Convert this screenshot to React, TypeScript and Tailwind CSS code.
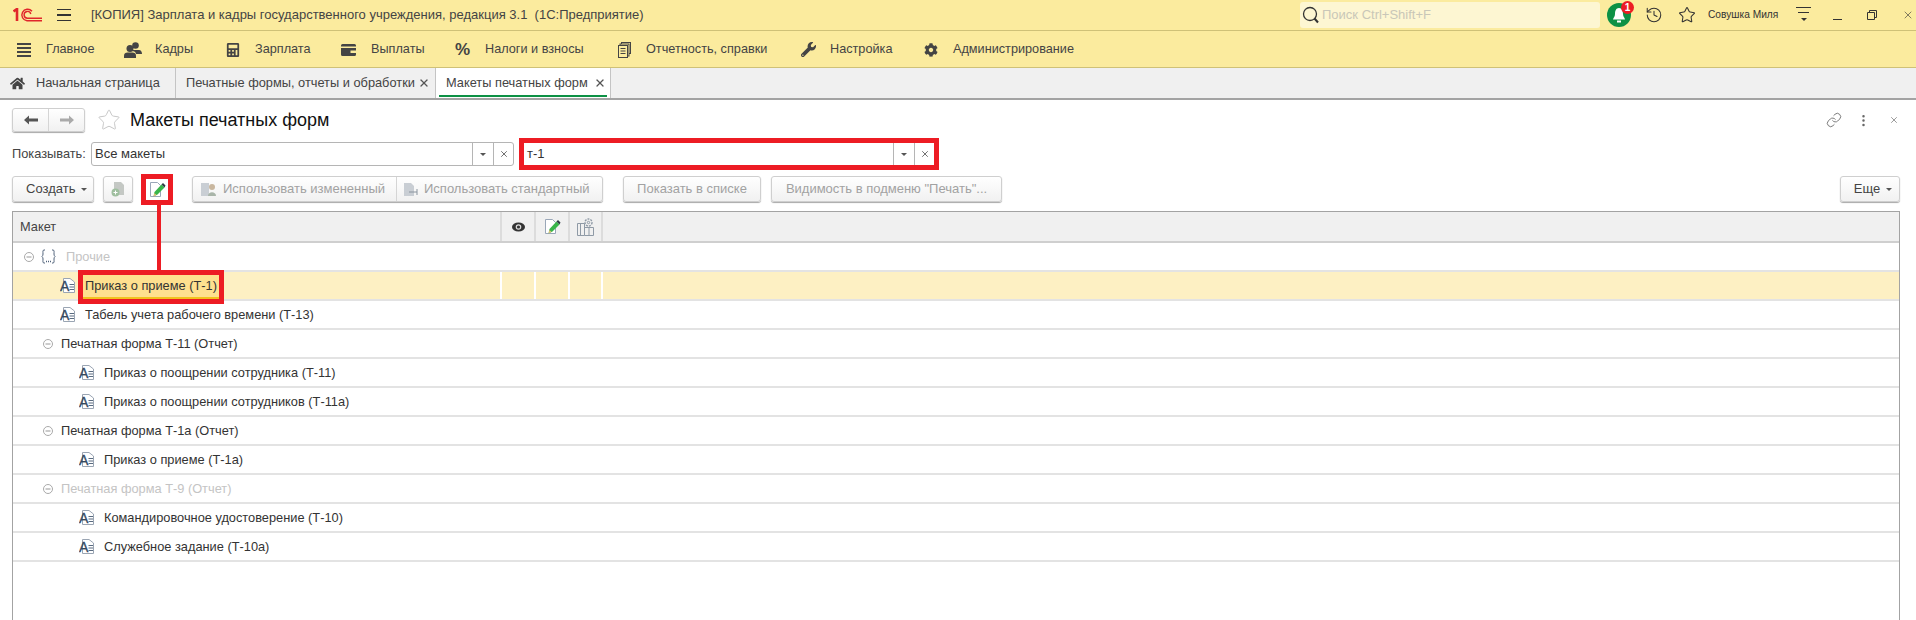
import { History, Link as LinkIcon, MoreVertical, Star, X } from "lucide-react";
import { FaCalculator, FaCog, FaHome, FaWrench } from "react-icons/fa";
import type { ReactNode } from "react";

const btn =
  "flex items-center justify-center h-[26px] rounded-[3px] border border-[#cfcfcf] bg-linear-to-b from-white to-[#f1f1f1] shadow-[0_1px_1px_#a8a8a8]";

const Logo = () => (
  <svg width="30" height="14" viewBox="0 0 30 14" fill="none" stroke="#e0262b">
    <path d="M0.5 3.5 L4 1 V13" strokeWidth="2.6" />
    <path d="M29 12.8 H14 A5.8 5.8 0 1 1 19 3.2" strokeWidth="1.4" />
    <path d="M29 10.2 H14.5 A3.4 3.4 0 1 1 17.8 6" strokeWidth="1.4" />
  </svg>
);

const Lines = ({ count = 3, w = 14, gap = 4, color = "#333" }: { count?: number; w?: number; gap?: number; color?: string }) => (
  <div className="flex flex-col" style={{ gap }}>
    {Array.from({ length: count }).map((_, i) => (
      <div key={i} className="h-[1.5px]" style={{ width: w, background: color }} />
    ))}
  </div>
);

const PeopleIcon = () => (
  <svg width="18" height="16" viewBox="0 0 18 16" fill="#444">
    <circle cx="11.5" cy="3.5" r="3.3" />
    <path d="M8 8 H15 C17 8 18 10 18 12 H12 C12 10 10 9 8 9 Z" />
    <circle cx="6" cy="6.5" r="3.5" />
    <path d="M0 16 V13.5 C0 11.5 1.5 10.5 3.5 10.5 H8.5 C10.5 10.5 12 11.5 12 13.5 V16 Z" />
  </svg>
);

const WalletIcon = () => (
  <svg width="15" height="12" viewBox="0 0 15 12" fill="#444">
    <path d="M0 1.5 A1.5 1.5 0 0 1 1.5 0 H13.5 A1.5 1.5 0 0 1 15 1.5 V2.5 H0 Z" />
    <path d="M0 4 H15 V10.5 A1.5 1.5 0 0 1 13.5 12 H1.5 A1.5 1.5 0 0 1 0 10.5 Z M9.5 6.5 V9 H15 V6.5 Z" fillRule="evenodd" />
  </svg>
);

const ReportsIcon = () => (
  <svg width="13" height="16" viewBox="0 0 13 16" fill="none" stroke="#444" strokeWidth="1">
    <rect x="3.5" y="0.5" width="9" height="11" fill="#fbeb9e" />
    <rect x="2" y="2" width="9" height="12" fill="#fbeb9e" />
    <rect x="0.5" y="3.5" width="9" height="12" fill="#fbeb9e" />
    <path d="M2.5 6.5 H7.5 M2.5 9 H7.5 M2.5 11.5 H7.5" />
  </svg>
);

const TemplateIcon = ({ ml }: { ml: number }) => (
  <svg width="16" height="15" viewBox="0 0 16 15" className="shrink-0" style={{ marginLeft: ml }}>
    <path d="M3.5 0.5 H10 L14.5 4 V14.5 H3.5 Z" fill="#fff" stroke="#9aa5b3" />
    <text x="0" y="13" fontSize="14" fontFamily="Liberation Sans" fill="#34495f" stroke="#34495f" strokeWidth="0.3">
      A
    </text>
    <path d="M9.5 6.5 H14 M9.5 9 H14 M9.5 11.5 H14" stroke="#5a6b80" />
  </svg>
);

const Collapse = ({ ml }: { ml: number }) => (
  <svg width="10" height="10" viewBox="0 0 10 10" className="shrink-0" style={{ marginLeft: ml }} fill="none" stroke="#a9a9a9">
    <circle cx="5" cy="5" r="4.5" />
    <path d="M2.5 5 H7.5" strokeWidth="1.2" />
  </svg>
);

const EditIcon = () => (
  <svg width="17" height="17" viewBox="0 0 17 17">
    <path d="M1.5 1.5 H8.5 L11.5 4.5 V15.5 H1.5 Z" fill="#fff" stroke="#9aa7b8" />
    <path d="M4.5 15.5 L5.5 11 L12.5 3.5 L15.5 6.5 L8.5 13.5 Z" fill="#39b54a" />
    <path d="M12.5 3.5 L14 2 L16.5 4.5 L15.5 6.5 Z" fill="#2f3b45" />
    <path d="M4.5 15.5 L5.5 12 L7.5 14 Z" fill="#e5c07b" />
  </svg>
);

const GearsTableIcon = () => (
  <svg width="17" height="18" viewBox="0 0 17 18" fill="none" stroke="#8f9aa6">
    <path d="M0.5 5.5 H7.5 V17.5 H0.5 Z M3.5 5.5 V17.5 M7.5 9.5 H16.5 V17.5 H7.5 M12 9.5 V17.5" />
    <circle cx="11.5" cy="4.5" r="3.5" fill="#f0f0f0" strokeWidth="1.4" strokeDasharray="2 1" />
    <circle cx="11.5" cy="4.5" r="1.2" />
  </svg>
);

const Eye = () => (
  <svg width="13" height="10" viewBox="0 0 13 10">
    <ellipse cx="6.5" cy="5" rx="6.5" ry="4.5" fill="#333" />
    <circle cx="6.5" cy="5" r="2.8" fill="#ddd" />
    <circle cx="6.5" cy="5" r="1.6" fill="#333" />
  </svg>
);

const Caret = ({ color = "#555" }: { color?: string }) => (
  <div className="h-0 w-0 border-x-[3px] border-t-[3px] border-x-transparent" style={{ borderTopColor: color }} />
);

const menu: { label: string; icon: ReactNode; iconW: number; gap: number; w: number }[] = [
  { label: "Главное", icon: <Lines count={4} w={14} gap={2.5} color="#444" />, iconW: 14, gap: 15, w: 107 },
  { label: "Кадры", icon: <PeopleIcon />, iconW: 18, gap: 13, w: 102 },
  { label: "Зарплата", icon: <FaCalculator size={14} color="#444" />, iconW: 14, gap: 15, w: 115 },
  { label: "Выплаты", icon: <WalletIcon />, iconW: 15, gap: 15, w: 114 },
  { label: "Налоги и взносы", icon: <span className="text-[17px] font-bold text-[#444]">%</span>, iconW: 15, gap: 15, w: 163 },
  { label: "Отчетность, справки", icon: <ReportsIcon />, iconW: 13, gap: 15, w: 182 },
  { label: "Настройка", icon: <FaWrench size={15} color="#444" />, iconW: 16, gap: 14, w: 124 },
  { label: "Администрирование", icon: <FaCog size={14} color="#444" />, iconW: 14, gap: 15, w: 160 },
];

const TitleBar = () => (
  <div className="flex h-[31px] items-center border-b border-[#cfc177] bg-[#fbeb9e] text-[#444]">
    <div className="ml-[13px]">
      <Logo />
    </div>
    <div className="ml-[14px]">
      <Lines />
    </div>
    <span className="ml-[20px] text-[13px]">[КОПИЯ] Зарплата и кадры государственного учреждения, редакция 3.1&nbsp; (1С:Предприятие)</span>
    <div className="ml-auto flex h-[26px] w-[300px] items-center rounded-[3px] bg-[#fdf6d2] pl-[2px]">
      <svg width="18" height="18" viewBox="0 0 18 18" fill="none" stroke="#333" strokeWidth="1.3">
        <circle cx="8" cy="8" r="6.5" />
        <path d="M12.5 12.5 L16 16.5" strokeWidth="2" />
      </svg>
      <span className="ml-[2px] text-[13px] text-[#c9c7b8]">Поиск Ctrl+Shift+F</span>
    </div>
    <div className="relative ml-[7px] flex h-[24px] w-[24px] items-center justify-center rounded-full bg-[#0d9145]">
      <svg width="14" height="16" viewBox="0 0 14 16" fill="#fff">
        <path d="M7 1 C10 1 11 4 11 7 C11 10 13 11 13 12.5 H1 C1 11 3 10 3 7 C3 4 4 1 7 1 Z" />
        <rect x="5" y="13.5" width="4" height="2" />
      </svg>
      <span className="absolute -top-[2px] -right-[3px] flex h-[13px] w-[13px] items-center justify-center rounded-full bg-[#ed1c24] text-[10px] font-bold text-white">
        1
      </span>
    </div>
    <History size={18} strokeWidth={1.4} color="#333" className="ml-[14px]" />
    <Star size={18} strokeWidth={1.4} color="#333" className="ml-[15px]" />
    <span className="ml-[12px] w-[76px] text-[10.2px] whitespace-nowrap text-[#333]">Совушка Миля</span>
    <div className="relative ml-[12px] flex h-[16px] w-[15px] flex-col items-center gap-[4px]">
      <div className="h-px w-[15px] bg-[#333]" />
      <div className="h-px w-[11px] bg-[#333]" />
      <div className="mt-[1px]">
        <Caret color="#333" />
      </div>
    </div>
    <div className="mt-[9px] ml-[22px] h-[1.5px] w-[9px] bg-[#333]" />
    <svg width="10" height="10" viewBox="0 0 10 10" fill="none" stroke="#333" className="ml-[25px]">
      <path d="M0.5 2.5 H7.5 V9.5 H0.5 Z M2.5 2.5 V0.5 H9.5 V7.5 H7.5" />
    </svg>
    <X size={12} strokeWidth={1.2} color="#333" className="mr-[2px] ml-[25px]" />
  </div>
);

const MenuBar = () => (
  <div className="flex h-[37px] items-center border-b border-[#cfc177] bg-[#fbeb9e] pt-[2px] pl-[17px] text-[12.7px] text-[#444]">
    {menu.map((m) => (
      <div key={m.label} className="flex items-center" style={{ gap: m.gap, width: m.w }}>
        <div className="flex items-center justify-center" style={{ width: m.iconW }}>
          {m.icon}
        </div>
        <span className="whitespace-nowrap">{m.label}</span>
      </div>
    ))}
  </div>
);

const TabClose = () => <X size={12} strokeWidth={2.5} color="#555" />;

const Tabs = () => (
  <div className="flex h-[32px] border-b-2 border-[#a3a3a3] bg-[#f0f0f0] text-[12.8px] text-[#444]">
    <div className="flex w-[176px] items-center border-r border-[#c4c4c4] pl-[10px]">
      <FaHome size={15} color="#444" />
      <span className="ml-[11px]">Начальная страница</span>
    </div>
    <div className="flex w-[260px] items-center border-r border-[#c4c4c4] pl-[10px]">
      <span className="whitespace-nowrap">Печатные формы, отчеты и обработки</span>
      <span className="ml-[3px]">
        <TabClose />
      </span>
    </div>
    <div className="relative flex w-[175px] items-center border-r border-[#c4c4c4] bg-white pl-[10px]">
      <span className="whitespace-nowrap">Макеты печатных форм</span>
      <span className="ml-[6px]">
        <TabClose />
      </span>
      <div className="absolute right-[3px] bottom-px left-[3px] h-[2px] bg-[#0d9145]" />
    </div>
  </div>
);

const Field = ({ value, className, bordered }: { value: string; className: string; bordered?: boolean }) => (
  <div
    className={`flex items-center bg-white text-[13px] text-[#333] ${
      bordered ? "h-[24px] rounded-[3px] border border-[#b5b5b5]" : "h-[22px]"
    } ${className}`}
  >
    <span className="flex-1 pl-[3px]">{value}</span>
    <div className="flex h-full w-[21px] items-center justify-center border-l border-[#b5b5b5]">
      <Caret />
    </div>
    <div className="flex h-full w-[20px] items-center justify-center border-l border-[#b5b5b5]">
      <X size={10} strokeWidth={2} color="#555" />
    </div>
  </div>
);

const Header = () => (
  <>
    <div className="flex h-[24px] items-center gap-[12px]">
      <div className="flex h-[24px] w-[73px] rounded-[3px] border border-[#cfcfcf] bg-linear-to-b from-white to-[#f1f1f1] shadow-[0_1px_1px_#a8a8a8]">
        <div className="flex flex-1 items-center justify-center border-r border-[#d5d5d5]">
          <svg width="14" height="10" viewBox="0 0 14 10" fill="#555">
            <path d="M0 5 L5 0.5 V3.5 H14 V6.5 H5 V9.5 Z" />
          </svg>
        </div>
        <div className="flex flex-1 items-center justify-center">
          <svg width="14" height="10" viewBox="0 0 14 10" fill="#aaa">
            <path d="M14 5 L9 0.5 V3.5 H0 V6.5 H9 V9.5 Z" />
          </svg>
        </div>
      </div>
      <Star size={24} strokeWidth={1} color="#c8c8c8" />
      <span className="ml-[-3px] text-[18px] text-[#111]">Макеты печатных форм</span>
      <div className="ml-auto flex items-center pr-[1px]">
        <LinkIcon size={16} strokeWidth={1.3} color="#666" />
        <MoreVertical size={15} strokeWidth={2} color="#666" className="ml-[14px]" />
        <X size={10} strokeWidth={1.4} color="#555" className="ml-[18px]" />
      </div>
    </div>
    <div className="mt-[10px] flex h-[24px] items-center">
      <span className="w-[79px] text-[12.8px] text-[#444]">Показывать:</span>
      <Field value="Все макеты" bordered className="w-[423px]" />
      <div className="ml-[5px] border-[5px] border-[#ed1c24]">
        <Field value="т-1" className="w-[410px]" />
      </div>
    </div>
  </>
);

const Toolbar = () => (
  <div className="mt-[10px] flex h-[26px] items-center text-[13px]">
    <div className={`${btn} w-[82px] justify-start gap-[6px] pl-[13px] text-[#444]`}>
      Создать <Caret />
    </div>
    <div className={`${btn} ml-[9px] w-[30px]`}>
      <svg width="15" height="16" viewBox="0 0 15 16">
        <path d="M3 1 H10 L13 4 V14 H3 Z" fill="#c4c8c4" />
        <circle cx="4.5" cy="11.5" r="4" fill="#9fbf9f" />
        <path d="M2.5 11.5 H6.5 M4.5 9.5 V13.5" stroke="#fff" />
      </svg>
    </div>
    <div className="relative ml-[8px] flex h-[31px] w-[32px] items-center justify-center border-[5px] border-[#ed1c24] bg-white">
      <EditIcon />
      <div className="absolute top-full left-[11px] z-20 h-[71px] w-[4px] bg-[#ed1c24]" />
    </div>
    <div className={`${btn} ml-[19px] w-[411px] text-[#a2a2a2]`}>
      <div className="flex h-full w-[204px] items-center gap-[6px] border-r border-[#d5d5d5] pl-[7px]">
        <svg width="17" height="15" viewBox="0 0 17 15">
          <path d="M1 1 H9 V14 H1 Z" fill="#c9ced4" />
          <circle cx="12" cy="5" r="3" fill="#c9b79f" />
          <path d="M8 14 C8 9 16 9 16 14 Z" fill="#a9b5a9" />
        </svg>
        Использовать измененный
      </div>
      <div className="flex h-full flex-1 items-center gap-[6px] pl-[6px]">
        <svg width="15" height="15" viewBox="0 0 15 15">
          <path d="M1 1 H8 L11 4 V14 H1 Z" fill="#c9ced4" />
          <path d="M6 10 H14 M14 7 V13" stroke="#8a949e" fill="none" />
        </svg>
        Использовать стандартный
      </div>
    </div>
    <div className={`${btn} ml-[20px] w-[138px] text-[#a2a2a2]`}>Показать в списке</div>
    <div className={`${btn} ml-[10px] w-[231px] text-[#a2a2a2]`}>Видимость в подменю "Печать"...</div>
    <div className={`${btn} ml-auto w-[60px] gap-[6px] pl-[6px] text-[#444]`}>
      Еще <Caret />
    </div>
  </div>
);

type Row = { label: string; level: 0 | 1 | 2 | 3; kind: "group" | "item"; dim?: boolean; selected?: boolean };

const rows: Row[] = [
  { label: "Прочие", level: 0, kind: "group", dim: true },
  { label: "Приказ о приеме (Т-1)", level: 1, kind: "item", selected: true },
  { label: "Табель учета рабочего времени (Т-13)", level: 1, kind: "item" },
  { label: "Печатная форма Т-11 (Отчет)", level: 2, kind: "group" },
  { label: "Приказ о поощрении сотрудника (Т-11)", level: 3, kind: "item" },
  { label: "Приказ о поощрении сотрудников (Т-11а)", level: 3, kind: "item" },
  { label: "Печатная форма Т-1а (Отчет)", level: 2, kind: "group" },
  { label: "Приказ о приеме (Т-1а)", level: 3, kind: "item" },
  { label: "Печатная форма Т-9 (Отчет)", level: 2, kind: "group", dim: true },
  { label: "Командировочное удостоверение (Т-10)", level: 3, kind: "item" },
  { label: "Служебное задание (Т-10а)", level: 3, kind: "item" },
];

const cols = "grid grid-cols-[489px_34px_34px_33px_1fr]";

const TableRow = ({ row }: { row: Row }) => {
  const text = row.dim ? "text-[#c4c4c4]" : "text-[#333]";
  return (
    <div className={`${cols} h-[29px] border-b-2 border-[#e3e3e3] ${row.selected ? "bg-[#fdf0c3]" : ""}`}>
      <div className={`flex h-full items-center ${row.selected ? "border-r-2 border-white" : ""}`}>
        {row.kind === "group" && row.level === 0 && (
          <>
            <Collapse ml={11} />
            <svg width="15" height="15" viewBox="0 0 15 15" fill="none" stroke="#50627a" className="ml-[7px]">
              <path d="M4 1 H3 C1.5 1 2 3 2 5 C2 7 1 7 1 7.5 C1 8 2 8 2 10 C2 12 1.5 14 3 14 H4" />
              <path d="M11 1 H12 C13.5 1 13 3 13 5 C13 7 14 7 14 7.5 C14 8 13 8 13 10 C13 12 13.5 14 12 14 H11" />
              <path d="M5 12.5 H6 M7 12.5 H8 M9 12.5 H10" strokeWidth="1.5" />
            </svg>
            <span className={`ml-[10px] ${text}`}>{row.label}</span>
          </>
        )}
        {row.kind === "group" && row.level === 2 && (
          <>
            <Collapse ml={30} />
            <span className={`ml-[8px] ${text}`}>{row.label}</span>
          </>
        )}
        {row.kind === "item" && (
          <>
            <TemplateIcon ml={row.level === 1 ? 47 : 66} />
            {row.selected ? (
              <span className="relative z-10 mt-[3px] ml-[7px] flex h-[24px] items-center self-start border-b-2 border-[#f2c21e] bg-[#fee08f] px-[2px] text-[#333] outline-[5px] outline-[#ed1c24]">
                {row.label}
              </span>
            ) : (
              <span className={`ml-[9px] ${text}`}>{row.label}</span>
            )}
          </>
        )}
      </div>
      {row.selected &&
        [0, 1, 2].map((i) => <div key={i} className="border-r-2 border-white" />)}
    </div>
  );
};

const Table = () => (
  <div className="mt-[9px] h-[500px] border border-[#a3a3a3] text-[12.8px]">
    <div className={`${cols} h-[31px] border-b-2 border-[#cfcfcf] bg-[#f0f0f0] text-[#444]`}>
      <div className="flex items-center border-r-2 border-[#dcdcdc] pl-[7px]">Макет</div>
      <div className="flex items-center justify-center border-r-2 border-[#dcdcdc]">
        <Eye />
      </div>
      <div className="flex items-center justify-center border-r-2 border-[#dcdcdc]">
        <EditIcon />
      </div>
      <div className="flex items-center justify-center border-r-2 border-[#dcdcdc]">
        <GearsTableIcon />
      </div>
    </div>
    {rows.map((r) => (
      <TableRow key={r.label} row={r} />
    ))}
  </div>
);

export default function App() {
  return (
    <div className="h-[620px] w-[1916px] overflow-hidden bg-white font-['Liberation_Sans',sans-serif]">
      <TitleBar />
      <MenuBar />
      <Tabs />
      <div className="pt-[8px] pr-[16px] pl-[12px]">
        <Header />
        <Toolbar />
        <Table />
      </div>
    </div>
  );
}
